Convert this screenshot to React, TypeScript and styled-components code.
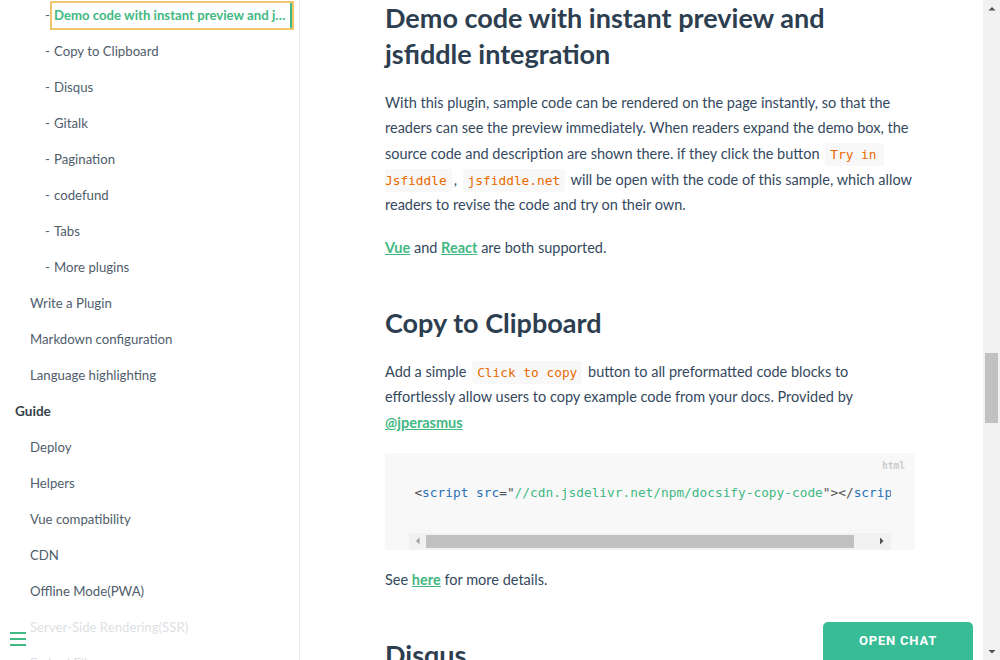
import React from "react";
import styled, { createGlobalStyle, css } from "styled-components";

const GlobalStyle = createGlobalStyle`
  html, body { margin: 0; padding: 0; background: #fff; overflow: hidden; }
  body { font-family: Lato, "Liberation Sans", sans-serif; -webkit-font-smoothing: antialiased; }
  * { box-sizing: border-box; }
`;

const MONO = `"DejaVu Sans Mono", "Liberation Mono", monospace`;

const Page = styled.div`
  display: flex;
  width: 1000px;
  height: 660px;
  overflow: hidden;
  position: relative;
`;

/* ---------- Sidebar ---------- */
const Sidebar = styled.aside`
  position: relative;
  width: 300px;
  flex: none;
  border-right: 1px solid rgba(0, 0, 0, 0.07);
  overflow: hidden;
`;

const SideList = styled.ul`
  list-style: none;
  margin: -3px 0 0;
  padding: 0;
`;

const SideItem = styled.li<{ $level: 1 | 2 | 3 }>`
  display: flex;
  align-items: center;
  height: 36px;
  padding-left: ${(p) => (p.$level === 1 ? 15 : p.$level === 2 ? 28 : 45)}px;
  padding-right: 7px;
  font-size: 13.2px;
  color: #505d6b;
  ${(p) =>
    p.$level === 3 &&
    css`
      &::before {
        content: "-";
        flex: none;
        width: 7px;
      }
    `}
`;

const SideLink = styled.a<{ $active?: boolean; $strong?: boolean }>`
  display: block;
  flex: 1;
  min-width: 0;
  height: 25px;
  line-height: 25px;
  padding-left: ${(p) => (p.$strong ? "0" : "2px")};
  color: ${(p) => (p.$active ? "#42b983" : p.$strong ? "#364149" : "#505d6b")};
  font-weight: ${(p) => (p.$active || p.$strong ? 700 : 400)};
  font-size: ${(p) => (p.$strong ? "13.6px" : "inherit")};
  text-decoration: none;
  white-space: nowrap;
  overflow: hidden;
  text-overflow: ellipsis;
  ${(p) =>
    p.$active &&
    css`
      border-right: 2px solid #42b983;
      outline: 2px solid #f2c56c;
    `}
`;

const SidebarToggle = styled.div`
  position: absolute;
  left: 0;
  bottom: 0;
  width: 284px;
  padding: 20px 10px 10px;
  background: rgba(255, 255, 255, 0.8);
`;

const ToggleLine = styled.span`
  display: block;
  width: 16px;
  height: 2px;
  margin-bottom: 4px;
  background: #42b983;
`;

/* ---------- Main ---------- */
const Main = styled.main`
  flex: 1;
  min-width: 0;
  overflow: hidden;
  padding: 0 68px 0 85px;
  color: #34495e;
`;

const Content = styled.section`
  margin-top: 0;
`;

const H2 = styled.h2<{ $first?: boolean }>`
  margin: ${(p) => (p.$first ? "0" : "45px")} 0 0;
  font-size: 27px;
  line-height: 36.4px;
  font-weight: 700;
  color: #2c3e50;
`;

const P = styled.p`
  margin: 17px 0;
  font-size: 14.5px;
  line-height: 25.6px;
`;

const Link = styled.a`
  color: #42b983;
  font-weight: 700;
  text-decoration: underline;
`;

const InlineCode = styled.code`
  font-family: ${MONO};
  font-size: 12.8px;
  line-height: 1;
  color: #e96900;
  background: #f8f8f8;
  border-radius: 2px;
  margin: 0 2px;
  padding: 4px 5px;
  white-space: pre-wrap;
`;

const Pre = styled.pre`
  position: relative;
  margin: 17px 0;
  padding: 0 22.4px;
  background: #f8f8f8;
  line-height: 24px;
  font-family: ${MONO};

  &::after {
    content: attr(data-lang);
    position: absolute;
    top: 0;
    right: 0;
    padding: 5px 10px 0;
    height: 15px;
    line-height: 15px;
    font-size: 9.6px;
    font-weight: 700;
    color: #ccc;
  }
`;

const CodeBox = styled.div`
  margin: 0 2px;
`;

const CodeLine = styled.code`
  display: block;
  padding: 28.16px 5px;
  overflow: hidden;
  white-space: pre;
  font-family: ${MONO};
  font-size: 12.8px;
  color: #525252;
`;

const Tok = styled.span<{ $t: "tag" | "attr" | "value" | "punct" }>`
  color: ${(p) =>
    p.$t === "tag" || p.$t === "attr" ? "#2973b7" : p.$t === "value" ? "#42b983" : "#525252"};
`;

/* scrollbars */
const HScrollbar = styled.div`
  display: flex;
  height: 17px;
  background: #f1f1f1;
`;

const ArrowBtn = styled.div`
  flex: none;
  width: 17px;
  height: 17px;
  display: flex;
  align-items: center;
  justify-content: center;
`;

const HTrack = styled.div`
  flex: 1;
  display: flex;
  align-items: center;
`;

const HThumb = styled.div`
  width: 428px;
  height: 13px;
  background: #c1c1c1;
`;

const VScrollbar = styled.div`
  flex: none;
  width: 17px;
  height: 660px;
  background: #f1f1f1;
  display: flex;
  flex-direction: column;
`;

const VTrack = styled.div`
  flex: 1;
  display: flex;
  flex-direction: column;
  align-items: center;
`;

const VThumb = styled.div`
  margin-top: 336px;
  width: 13px;
  height: 70px;
  background: #c1c1c1;
`;

const ChatButton = styled.button`
  position: absolute;
  left: 823px;
  top: 622px;
  width: 150px;
  height: 50px;
  border: none;
  border-radius: 5px 5px 0 0;
  background: #38bc96;
  color: #fff;
  font-family: Roboto, "Liberation Sans", sans-serif;
  font-weight: 700;
  font-size: 13px;
  letter-spacing: 0.8px;
  padding: 0 0 14px;
  text-transform: uppercase;
  cursor: pointer;
`;

type Dir = "up" | "down" | "left" | "right";
const Arrow = ({ dir, color }: { dir: Dir; color: string }) => {
  const pts: Record<Dir, string> = {
    up: "0.5,4.5 4,1 7.5,4.5",
    down: "0.5,1 4,4.5 7.5,1",
    left: "4.5,0.5 1,4 4.5,7.5",
    right: "1,0.5 4.5,4 1,7.5",
  };
  const vertical = dir === "up" || dir === "down";
  return (
    <svg width={vertical ? 8 : 6} height={vertical ? 6 : 8} viewBox={vertical ? "0 0 8 6" : "0 0 6 8"}>
      <polygon points={pts[dir]} fill={color} />
    </svg>
  );
};

type NavItem = { level: 1 | 2 | 3; text: string; active?: boolean };
const nav: NavItem[] = [
  { level: 3, text: "Demo code with instant preview and jsfiddle integration", active: true },
  { level: 3, text: "Copy to Clipboard" },
  { level: 3, text: "Disqus" },
  { level: 3, text: "Gitalk" },
  { level: 3, text: "Pagination" },
  { level: 3, text: "codefund" },
  { level: 3, text: "Tabs" },
  { level: 3, text: "More plugins" },
  { level: 2, text: "Write a Plugin" },
  { level: 2, text: "Markdown configuration" },
  { level: 2, text: "Language highlighting" },
  { level: 1, text: "Guide" },
  { level: 2, text: "Deploy" },
  { level: 2, text: "Helpers" },
  { level: 2, text: "Vue compatibility" },
  { level: 2, text: "CDN" },
  { level: 2, text: "Offline Mode(PWA)" },
  { level: 2, text: "Server-Side Rendering(SSR)" },
  { level: 2, text: "Embed Files" },
];

export default function App() {
  return (
    <Page>
      <GlobalStyle />
      <Sidebar>
        <SideList>
          {nav.map((n) => (
            <SideItem key={n.text} $level={n.level}>
              <SideLink href="#" $active={n.active} $strong={n.level === 1}>
                {n.text}
              </SideLink>
            </SideItem>
          ))}
        </SideList>
        <SidebarToggle>
          <ToggleLine />
          <ToggleLine />
          <ToggleLine />
        </SidebarToggle>
      </Sidebar>

      <Main>
        <Content>
          <H2 $first>Demo code with instant preview and jsfiddle integration</H2>
          <P>
            With this plugin, sample code can be rendered on the page instantly, so that the readers can see
            the preview immediately. When readers expand the demo box, the source code and description are
            shown there. if they click the button <InlineCode>Try in Jsfiddle</InlineCode>,{" "}
            <InlineCode>jsfiddle.net</InlineCode> will be open with the code of this sample, which allow
            readers to revise the code and try on their own.
          </P>
          <P>
            <Link href="#">Vue</Link> and <Link href="#">React</Link> are both supported.
          </P>

          <H2>Copy to Clipboard</H2>
          <P>
            Add a simple <InlineCode>Click to copy</InlineCode> button to all preformatted code blocks to
            effortlessly allow users to copy example code from your docs. Provided by{" "}
            <Link href="#">@jperasmus</Link>
          </P>
          <Pre data-lang="html">
            <CodeBox>
              <CodeLine>
                <Tok $t="punct">&lt;</Tok>
                <Tok $t="tag">script</Tok> <Tok $t="attr">src</Tok>
                <Tok $t="punct">="</Tok>
                <Tok $t="value">//cdn.jsdelivr.net/npm/docsify-copy-code</Tok>
                <Tok $t="punct">"&gt;&lt;/</Tok>
                <Tok $t="tag">script</Tok>
                <Tok $t="punct">&gt;</Tok>
              </CodeLine>
              <HScrollbar>
                <ArrowBtn>
                  <Arrow dir="left" color="#a3a3a3" />
                </ArrowBtn>
                <HTrack>
                  <HThumb />
                </HTrack>
                <ArrowBtn>
                  <Arrow dir="right" color="#505050" />
                </ArrowBtn>
              </HScrollbar>
            </CodeBox>
          </Pre>
          <P>
            See <Link href="#">here</Link> for more details.
          </P>

          <H2>Disqus</H2>
        </Content>
      </Main>

      <VScrollbar>
        <ArrowBtn>
          <Arrow dir="up" color="#505050" />
        </ArrowBtn>
        <VTrack>
          <VThumb />
        </VTrack>
        <ArrowBtn>
          <Arrow dir="down" color="#505050" />
        </ArrowBtn>
      </VScrollbar>

      <ChatButton>Open Chat</ChatButton>
    </Page>
  );
}
